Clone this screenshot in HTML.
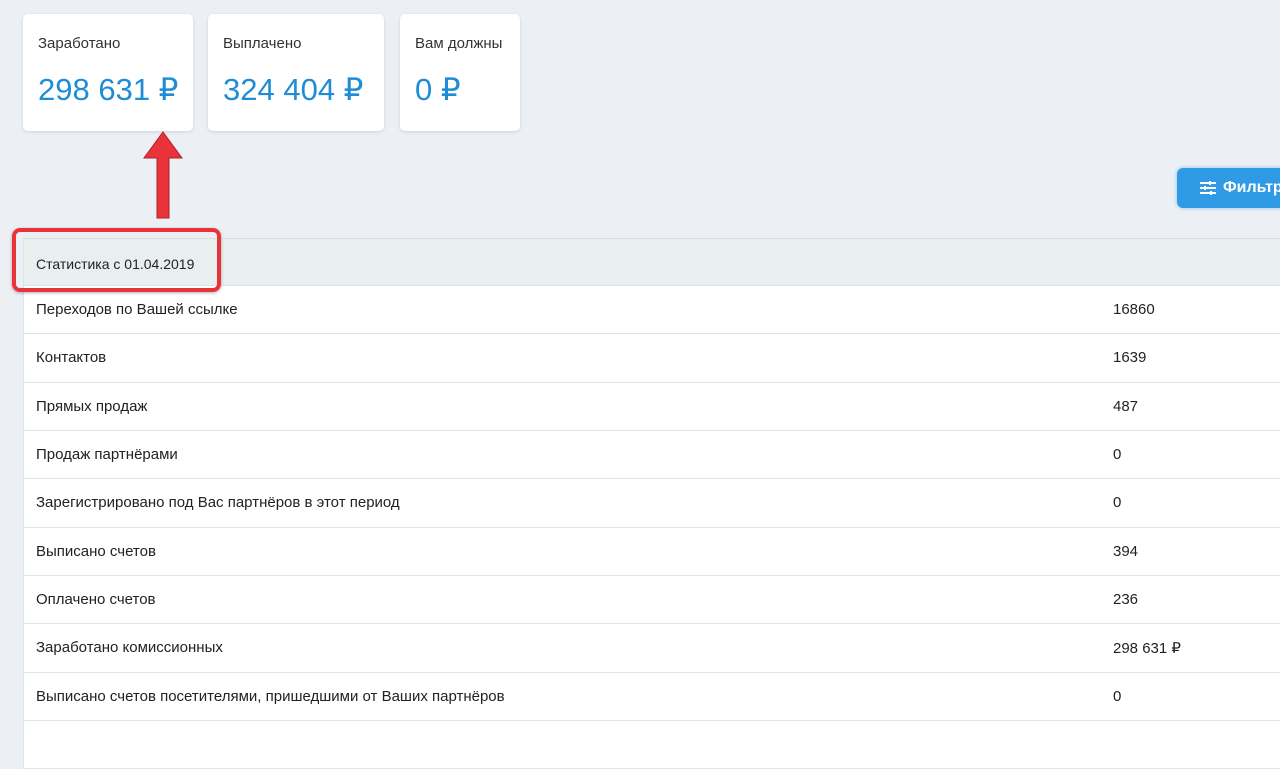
<!DOCTYPE html>
<html><head><meta charset="utf-8"><style>
body{margin:0;width:1280px;height:728px;overflow:hidden;background:#ecf0f4;font-family:"Liberation Sans",sans-serif;position:relative;color:#222}
.card{position:absolute;top:14px;height:117px;background:#fff;border-radius:5px;box-shadow:0 1px 3px rgba(0,0,0,.12)}
.card .t{position:absolute;left:15px;top:21px;font-size:15px;color:#333}
.card .v{position:absolute;left:15px;top:58px;font-size:31px;color:#1f8dd6}
.btn{position:absolute;left:1177px;top:168px;width:120px;height:40px;background:#2f9be6;border-radius:6px;color:#fff;font-weight:bold;font-size:16px;box-shadow:0 0 4px rgba(47,155,230,.5)}
.tbl{position:absolute;left:23px;top:238px;width:1260px;background:#fff;border-left:1px solid #dde2e6}
.row{height:48.35px;box-sizing:border-box;border-bottom:1px solid #dfe3e6;position:relative;font-size:15px}
.row span{position:absolute;top:15px}
.row .a{left:12px}.row .b{left:1089px}
.hd{background:#e9eeef;border-top:1px solid #d8dde0;height:48px;font-size:14px}
.hd span{top:17px;left:12px;position:absolute}
</style></head><body>
<div class="card" style="left:23px;width:170px"><div class="t">Заработано</div><div class="v">298 631 ₽</div></div>
<div class="card" style="left:208px;width:176px"><div class="t">Выплачено</div><div class="v">324 404 ₽</div></div>
<div class="card" style="left:400px;width:120px"><div class="t">Вам должны</div><div class="v">0 ₽</div></div>
<div class="btn"><svg style="position:absolute;left:22px;top:12px" width="18" height="16" viewBox="0 0 18 16" stroke="#fff" stroke-width="2"><path d="M1 3h16M1 8h16M1 13h16"/><path d="M11 1v4M6 6v4M12 11v4"/></svg><span style="position:absolute;left:46px;top:11px">Фильтр</span></div>
<div class="tbl">
<div class="row hd"><span>Статистика с 01.04.2019</span></div>
<div class="row"><span class="a">Переходов по Вашей ссылке</span><span class="b">16860</span></div>
<div class="row"><span class="a">Контактов</span><span class="b">1639</span></div>
<div class="row"><span class="a">Прямых продаж</span><span class="b">487</span></div>
<div class="row"><span class="a">Продаж партнёрами</span><span class="b">0</span></div>
<div class="row"><span class="a">Зарегистрировано под Вас партнёров в этот период</span><span class="b">0</span></div>
<div class="row"><span class="a">Выписано счетов</span><span class="b">394</span></div>
<div class="row"><span class="a">Оплачено счетов</span><span class="b">236</span></div>
<div class="row"><span class="a">Заработано комиссионных</span><span class="b">298 631 ₽</span></div>
<div class="row"><span class="a">Выписано счетов посетителями, пришедшими от Ваших партнёров</span><span class="b">0</span></div>
<div class="row"></div>
</div>
<div style="position:absolute;left:12px;top:228px;width:201px;height:56px;border:4px solid #e8333a;border-radius:8px;box-shadow:0 1px 3px rgba(0,0,0,.3)"></div>
<svg style="position:absolute;left:140px;top:128px" width="46" height="96"><path d="M23 4L42 30H29V90H17V30H4Z" fill="#e8333a" stroke="#b02028" stroke-width="1"/></svg>
</body></html>
